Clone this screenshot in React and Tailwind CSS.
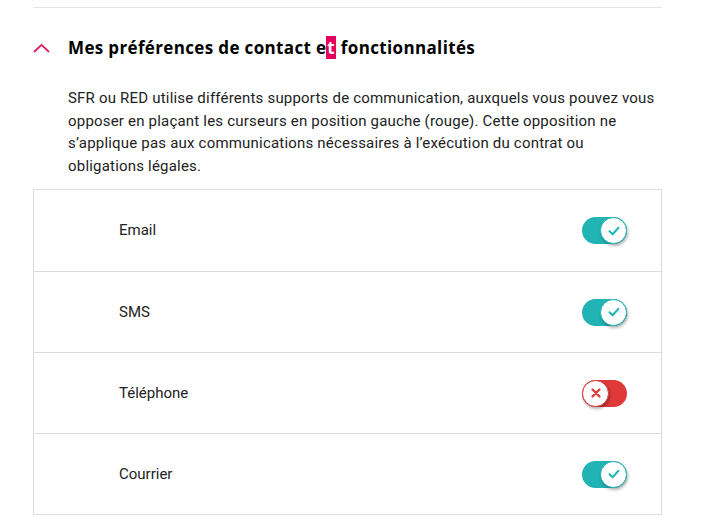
import React from 'react';

const channels = [
  { name: 'Email', on: true },
  { name: 'SMS', on: true },
  { name: 'Téléphone', on: false },
  { name: 'Courrier', on: true },
];

function Toggle({ on }) {
  return (
    <div
      className={
        'relative w-[45px] h-[27px] rounded-full flex items-center ' +
        (on ? 'bg-[#22b4b4] justify-end' : 'bg-[#e0393a] justify-start')
      }
    >
      <div
        className={
          'w-[27px] h-[27px] rounded-full bg-white flex items-center justify-center shadow-[1px_2px_3px_rgba(0,0,0,0.3)] border ' +
          (on ? 'border-[#22b4b4]' : 'border-[#e0393a]')
        }
      >
        {on ? (
          <svg width="12" height="10" viewBox="0 0 12 10" fill="none">
            <path d="M1.5 5.2 L4.6 8.2 L10.5 1.8" stroke="#22b4b4" strokeWidth="2" strokeLinecap="round" strokeLinejoin="round" />
          </svg>
        ) : (
          <svg width="10" height="10" viewBox="0 0 10 10" fill="none">
            <path d="M1.5 1.5 L8.5 8.5 M8.5 1.5 L1.5 8.5" stroke="#e0393a" strokeWidth="2.2" strokeLinecap="round" />
          </svg>
        )}
      </div>
    </div>
  );
}

export default function App() {
  return (
    <div className="w-[714px] h-[525px] bg-white overflow-hidden font-['Roboto',sans-serif] text-[#222]">
      <div className="ml-[33px] w-[629px] pt-[7px]">
        <div className="border-t border-[#e5e5e5]" />
        <div className="flex items-center h-[78px] pt-[1px]">
          <svg width="17" height="10" viewBox="0 0 17 10" fill="none">
            <path d="M1.5 8.5 L8.5 1.8 L15.5 8.5" stroke="#e4175f" strokeWidth="1.8" strokeLinecap="round" strokeLinejoin="round" />
          </svg>
          <h2 className="ml-[18px] text-[17px] font-bold text-black font-['Open_Sans',sans-serif] tracking-[0.35px]">
            Mes préférences de contact e<span className="bg-[#e4005b] text-white px-[1px]">t</span> fonctionnalités
          </h2>
        </div>
        <p className="ml-[35px] w-[594px] text-[15px] leading-[22.5px] text-[#222] tracking-[0.2px] pt-[1px]">
          SFR ou RED utilise différents supports de communication, auxquels vous pouvez vous opposer en plaçant les curseurs en position gauche (rouge). Cette opposition ne s’applique pas aux communications nécessaires à l’exécution du contrat ou obligations légales.
        </p>
        <div className="mt-[12px] border border-[#dcdcdc]">
          {channels.map((c, i) => (
            <div
              key={c.name}
              className={
                'h-[81px] flex items-center justify-between pl-[85px] pr-[34px] ' +
                (i > 0 ? 'border-t border-[#dcdcdc]' : '')
              }
            >
              <span className="text-[15px] text-[#222]">{c.name}</span>
              <Toggle on={c.on} />
            </div>
          ))}
        </div>
      </div>
    </div>
  );
}
